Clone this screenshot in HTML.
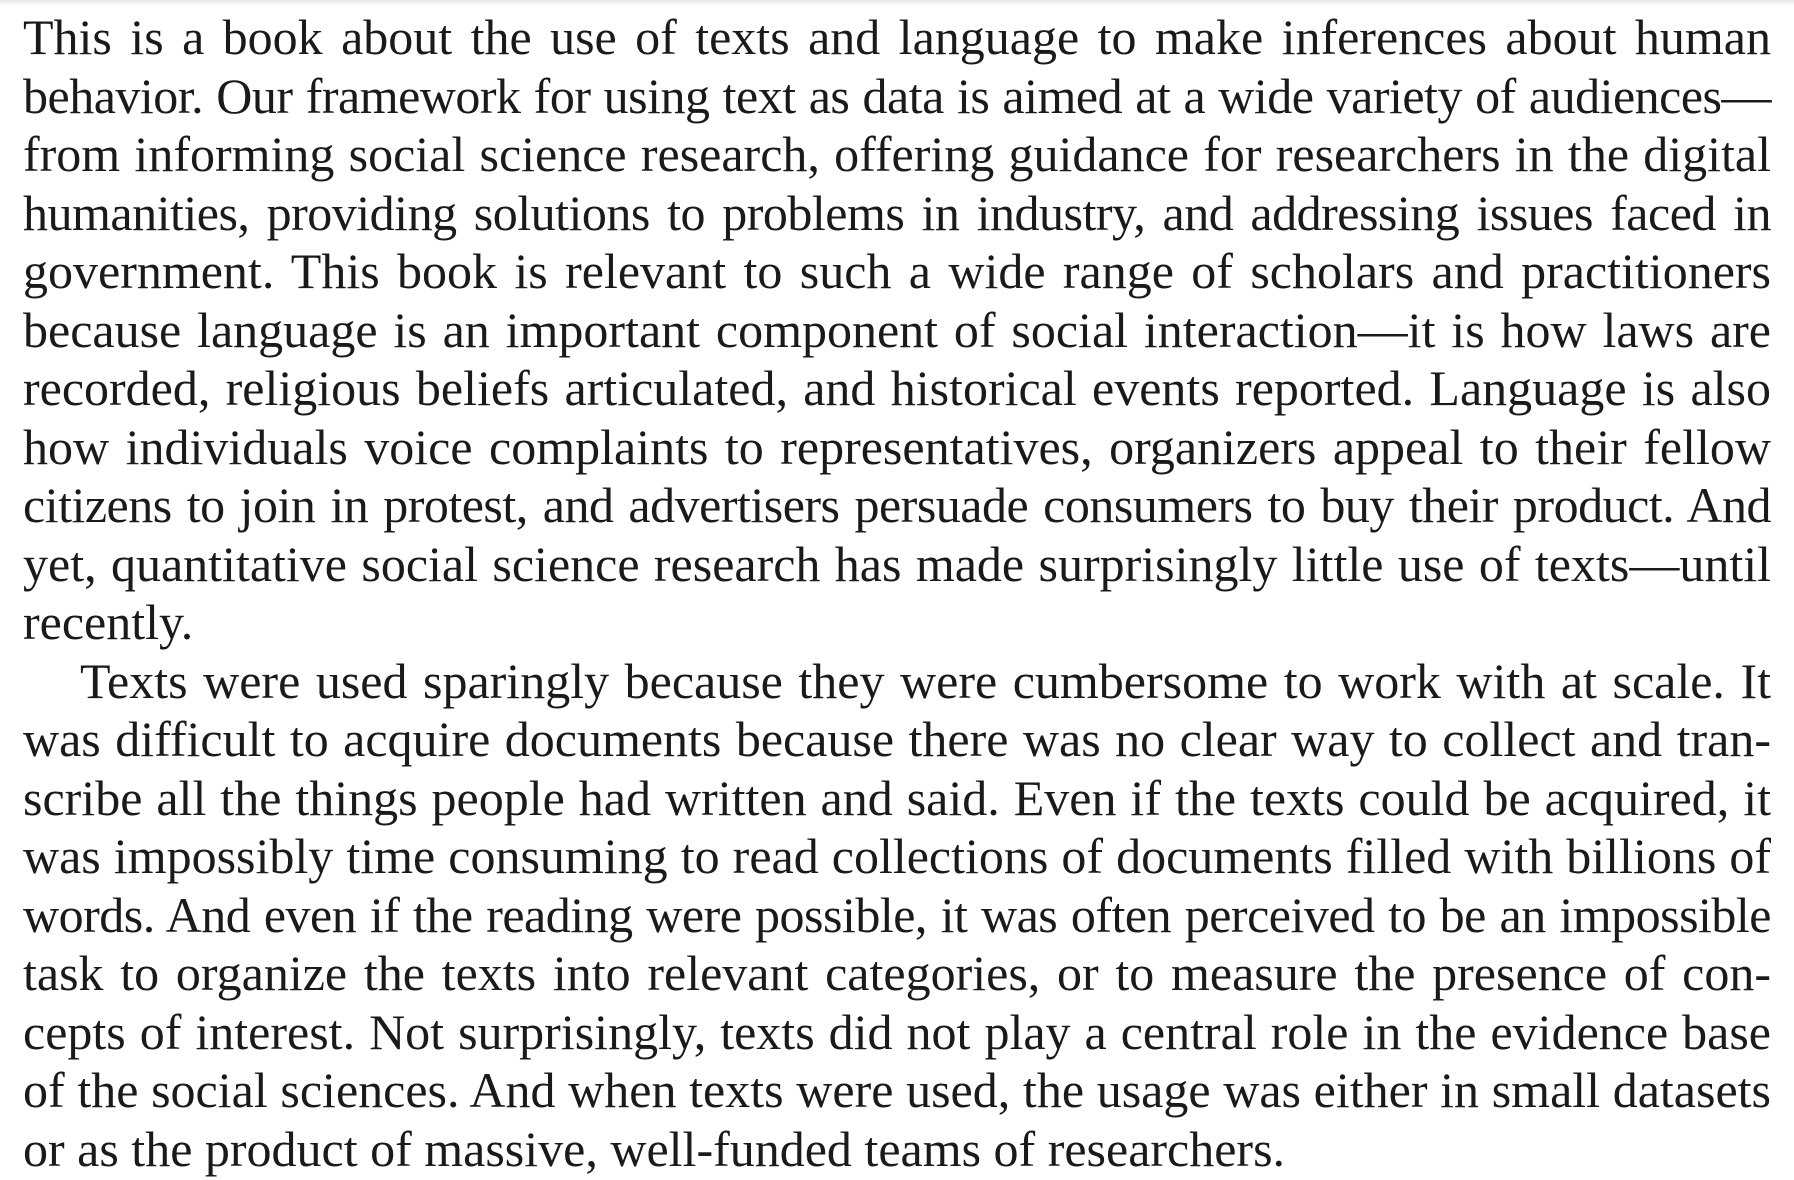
<!DOCTYPE html>
<html><head><meta charset="utf-8"><style>
html,body{margin:0;padding:0;background:#fff;}
body{width:1794px;height:1180px;overflow:hidden;position:relative;}
.top{position:absolute;left:0;top:0;width:1794px;height:6px;background:linear-gradient(#e6e6e6,#fff);}
.wrap{position:absolute;left:23px;top:8px;width:1748px;font-family:"Liberation Serif",serif;font-size:50px;line-height:58.5px;color:#1a1a1a;}
.l{text-align:justify;text-align-last:justify;height:58.5px;overflow:visible;white-space:normal;}
.t{letter-spacing:-0.5px;}
.e{text-align:left;text-align-last:left;}
.i{padding-left:57px;}
</style></head><body>
<div class="top"></div>
<div class="wrap">
<div class="l">This is a book about the use of texts and language to make inferences about human</div>
<div class="l t">behavior. Our framework for using text as data is aimed at a wide variety of audiences—</div>
<div class="l">from informing social science research, offering guidance for researchers in the digital</div>
<div class="l t">humanities, providing solutions to problems in industry, and addressing issues faced in</div>
<div class="l">government. This book is relevant to such a wide range of scholars and practitioners</div>
<div class="l">because language is an important component of social interaction—it is how laws are</div>
<div class="l">recorded, religious beliefs articulated, and historical events reported. Language is also</div>
<div class="l">how individuals voice complaints to representatives, organizers appeal to their fellow</div>
<div class="l t">citizens to join in protest, and advertisers persuade consumers to buy their product. And</div>
<div class="l">yet, quantitative social science research has made surprisingly little use of texts—until</div>
<div class="l e">recently.</div>
<div class="l i">Texts were used sparingly because they were cumbersome to work with at scale. It</div>
<div class="l">was difficult to acquire documents because there was no clear way to collect and tran-</div>
<div class="l">scribe all the things people had written and said. Even if the texts could be acquired, it</div>
<div class="l">was impossibly time consuming to read collections of documents filled with billions of</div>
<div class="l t">words. And even if the reading were possible, it was often perceived to be an impossible</div>
<div class="l">task to organize the texts into relevant categories, or to measure the presence of con-</div>
<div class="l">cepts of interest. Not surprisingly, texts did not play a central role in the evidence base</div>
<div class="l">of the social sciences. And when texts were used, the usage was either in small datasets</div>
<div class="l e">or as the product of massive, well-funded teams of researchers.</div>
</div>
</body></html>
